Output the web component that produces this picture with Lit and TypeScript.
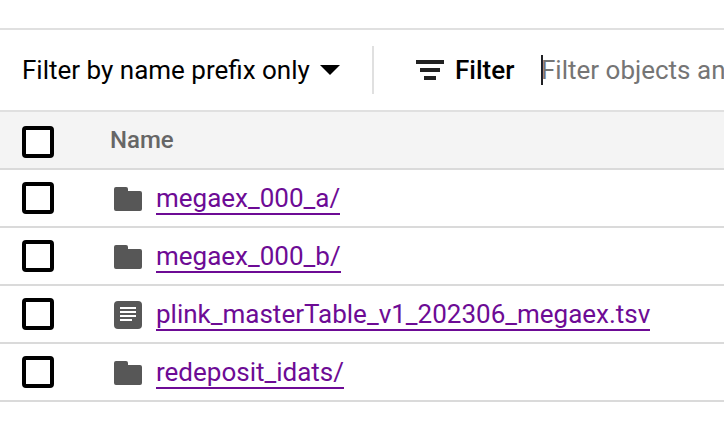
import { LitElement, html, css, svg } from "lit";
import { customElement } from "lit/decorators.js";

interface Entry {
  name: string;
  kind: "folder" | "file";
}

const entries: Entry[] = [
  { name: "megaex_000_a/", kind: "folder" },
  { name: "megaex_000_b/", kind: "folder" },
  { name: "plink_masterTable_v1_202306_megaex.tsv", kind: "file" },
  { name: "redeposit_idats/", kind: "folder" },
];

const folder = svg`<path fill="#575757" d="M2 2h10a2 2 0 0 1 2 2v2h12a2 2 0 0 1 2 2v16a2 2 0 0 1-2 2H2a2 2 0 0 1-2-2V4a2 2 0 0 1 2-2z"/>`;
const file = svg`<rect width="28" height="28" rx="4" fill="#575757"/><path fill="#fff" d="M6 6h16v2H6zM6 10h16v2H6zM6 14h16v2H6zM6 18h12v2H6z"/>`;

@customElement("app-root")
export class AppRoot extends LitElement {
  static styles = css`
    :host {
      display: block;
      box-sizing: border-box;
      height: 446px;
      padding-top: 28px;
      overflow: hidden;
      background: #fff;
      font: 400 26px/32px Roboto, sans-serif;
      color: #000;
      white-space: nowrap;
    }
    svg { display: block; flex: none; }
    .toolbar {
      display: flex;
      align-items: center;
      box-sizing: border-box;
      height: 84px;
      padding-left: 22px;
      border-top: 2px solid #e0e0e0;
      border-bottom: 2px solid #e0e0e0;
    }
    .mode { display: flex; flex: none; align-items: center; width: 350px; gap: 10px; }
    .divider { flex: none; width: 2px; height: 48px; background: #e0e0e0; }
    .filter {
      display: flex;
      flex: none;
      align-items: center;
      gap: 11px;
      margin-left: 42px;
      width: 125px;
      font-weight: 500;
    }
    .caret { flex: none; width: 2px; height: 30px; background: #202124; }
    .hint { flex: none; color: #757575; margin-left: -2px; }
    .row {
      display: flex;
      align-items: center;
      box-sizing: border-box;
      height: 58px;
      padding-left: 22px;
      border-bottom: 2px solid #dadada;
    }
    .head {
      background: #f4f4f4;
      color: #666;
      font-size: 24px;
      font-weight: 500;
    }
    .head .box { margin-top: 4px; }
    .box {
      flex: none;
      box-sizing: border-box;
      width: 32px;
      height: 32px;
      border: 4px solid #000;
      border-radius: 4px;
      background: #fff;
    }
    .title { margin-left: 56px; }
    .icon { margin: 2px 14px 0 60px; }
    .link {
      color: #6d0b95;
      line-height: 31px;
      height: 32px;
      margin-top: 2px;
      border-bottom: 2px solid #6d0b95;
      box-sizing: border-box;
    }
  `;

  render() {
    return html`
      <div class="toolbar">
        <div class="mode">
          <span>Filter by name prefix only</span>
          <svg width="20" height="10" viewBox="0 0 20 10"><path d="M0 0h20L10 10z" /></svg>
        </div>
        <div class="divider"></div>
        <div class="filter">
          <svg width="28" height="20" viewBox="0 0 28 20">
            <path fill="#212121" d="M0 0h28v4H0zM4 8h20v4H4zM8 16h12v4H8z" />
          </svg>
          <span>Filter</span>
        </div>
        <div class="caret"></div>
        <span class="hint">Filter objects an</span>
      </div>
      <div class="row head">
        <div class="box"></div>
        <span class="title">Name</span>
      </div>
      ${entries.map(
        (e) => html`
          <div class="row">
            <div class="box"></div>
            <svg class="icon" width="28" height="28" viewBox="0 0 28 28">
              ${e.kind === "folder" ? folder : file}
            </svg>
            <span class="link">${e.name}</span>
          </div>
        `
      )}
    `;
  }
}
